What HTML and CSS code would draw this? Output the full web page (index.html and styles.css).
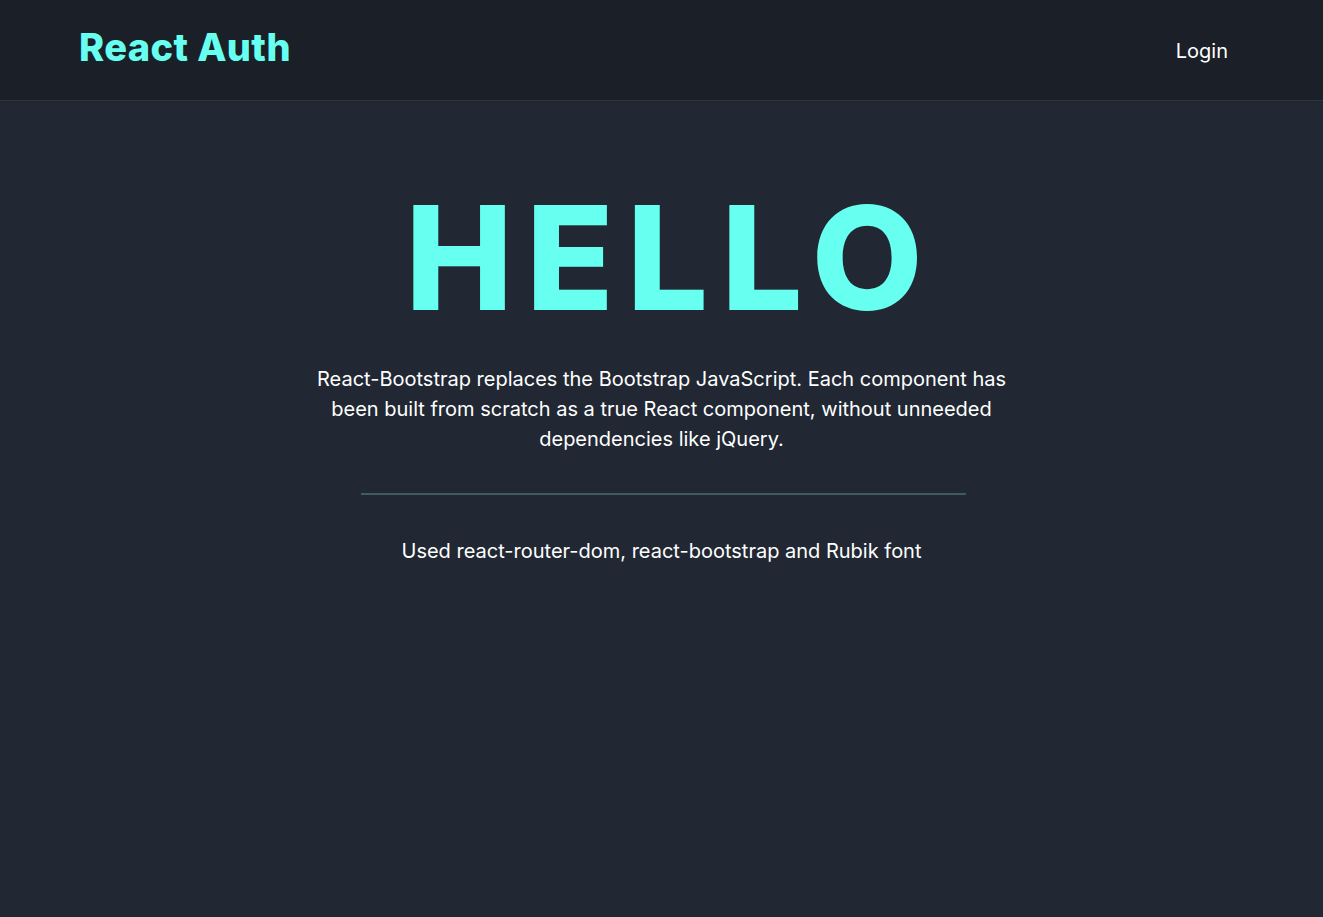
FILE: index.html
```html
<!DOCTYPE html>
<html lang="en">
<head>
<meta charset="utf-8">
<title>React Auth</title>
<link rel="stylesheet" href="styles.css">
</head>
<body>
<header class="navbar">
  <a class="brand" href="#">React Auth</a>
  <nav class="nav"><a class="nav-link" href="#">Login</a></nav>
</header>
<main class="hero">
  <h1 class="hero-title">HELLO</h1>
  <p class="hero-lead">React-Bootstrap replaces the Bootstrap JavaScript. Each component has been built from scratch as a true React component, without unneeded dependencies like jQuery.</p>
  <hr class="hero-rule">
  <p class="hero-note">Used react-router-dom, react-bootstrap and Rubik font</p>
</main>
</body>
</html>
```
FILE: styles.css
```css
* { box-sizing: border-box; }
html, body { margin: 0; height: 100%; }
body {
  background: #212833;
  color: #ffffff;
  font-family: Inter, "Noto Sans", sans-serif;
}
.navbar {
  height: 101px;
  background: #1b1f27;
  border-bottom: 1px solid #2e343d;
  display: flex;
  align-items: center;
  justify-content: space-between;
  padding: 0 87px 0 79px;
}
.brand {
  color: #66fff0;
  font-size: 38px;
  font-weight: 800;
  text-decoration: none;
  letter-spacing: 0.4px;
  margin-top: -6px;
}
.nav-link {
  color: #ffffff;
  font-size: 20px;
  text-decoration: none;
  padding: 8px;
  position: relative;
  top: 1px;
}
.hero {
  display: flex;
  flex-direction: column;
  align-items: center;
  text-align: center;
  padding-top: 85px;
}
.hero-title {
  margin: 0;
  padding-left: 18px;
  color: #66fff0;
  font-size: 144px;
  font-weight: 800;
  line-height: 1;
  letter-spacing: 13px;
}
.hero-lead {
  margin: 34px 0 0;
  max-width: 700px;
  font-size: 20px;
  line-height: 30px;
}
.hero-rule {
  width: 605px;
  margin: 39px 0 0 4px;
  border: 0;
  border-top: 2px solid #3c5e61;
}
.hero-note {
  margin: 41px 0 0;
  font-size: 20px;
  line-height: 30px;
}
```
